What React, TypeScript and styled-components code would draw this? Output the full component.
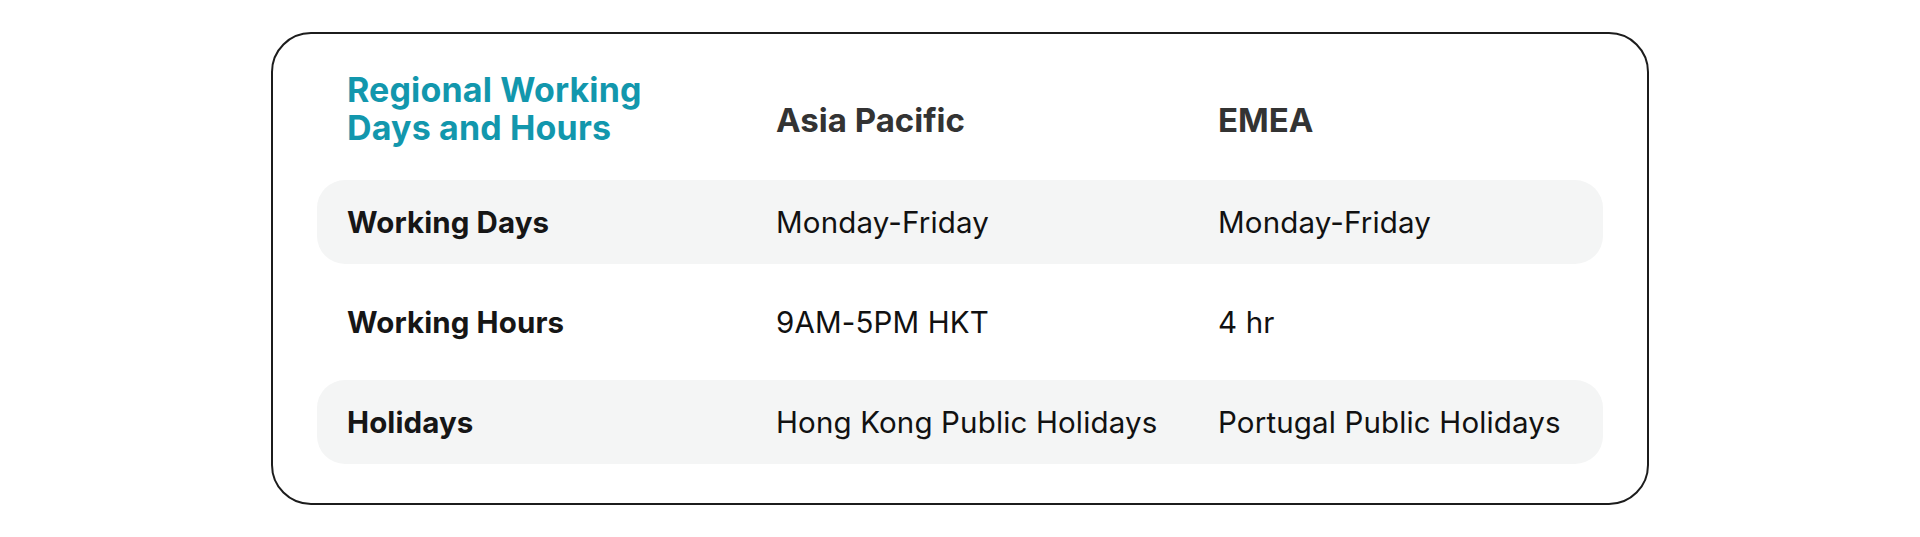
import React from "react";
import styled, { createGlobalStyle } from "styled-components";

const Global = createGlobalStyle`
  html, body { margin: 0; padding: 0; background: #ffffff; }
  body { font-family: "Inter", "Noto Sans", sans-serif; -webkit-font-smoothing: antialiased; }
`;

const Page = styled.main`
  padding: 32px 0;
`;

const Card = styled.section`
  box-sizing: border-box;
  width: 1378px;
  height: 473px;
  margin: 0 auto;
  border: 2px solid #1c1c1c;
  border-radius: 40px;
  padding: 37px 44px 0;
  display: flex;
  flex-direction: column;
`;

const Grid = styled.div<{ $shaded?: boolean }>`
  display: grid;
  grid-template-columns: 429px 442px 1fr;
  padding: 0 30px;
  align-items: center;
  border-radius: 28px;
  background: ${(p) => (p.$shaded ? "#f4f5f5" : "transparent")};
`;

const HeaderRow = styled(Grid)`
  align-items: end;
  margin-bottom: 33px;
`;

const Title = styled.h2`
  margin: 0;
  font-size: 34px;
  line-height: 38px;
  font-weight: 700;
  color: #1297ad;
  letter-spacing: 0.15px;
`;

const ColHead = styled.div`
  font-size: 33px;
  line-height: 38px;
  font-weight: 700;
  color: #333333;
  padding-bottom: 8px;
`;

const Rows = styled.div`
  display: flex;
  flex-direction: column;
  gap: 16px;
`;

const Row = styled(Grid)`
  height: 84px;
`;

const Label = styled.div`
  font-size: 29.5px;
  line-height: 36px;
  font-weight: 700;
  color: #161616;
  letter-spacing: 0.1px;
`;

const Value = styled.div`
  font-size: 29.5px;
  line-height: 36px;
  font-weight: 400;
  color: #111111;
  letter-spacing: 0.15px;
`;

const rows = [
  { label: "Working Days", apac: "Monday-Friday", emea: "Monday-Friday" },
  { label: "Working Hours", apac: "9AM-5PM HKT", emea: "4 hr" },
  { label: "Holidays", apac: "Hong Kong Public Holidays", emea: "Portugal Public Holidays" },
];

export default function App() {
  return (
    <>
      <Global />
      <Page>
        <Card>
          <HeaderRow>
            <Title>
              Regional Working
              <br />
              Days and Hours
            </Title>
            <ColHead>Asia Pacific</ColHead>
            <ColHead>EMEA</ColHead>
          </HeaderRow>
          <Rows>
            {rows.map((r, i) => (
              <Row key={r.label} $shaded={i % 2 === 0}>
                <Label>{r.label}</Label>
                <Value>{r.apac}</Value>
                <Value>{r.emea}</Value>
              </Row>
            ))}
          </Rows>
        </Card>
      </Page>
    </>
  );
}
